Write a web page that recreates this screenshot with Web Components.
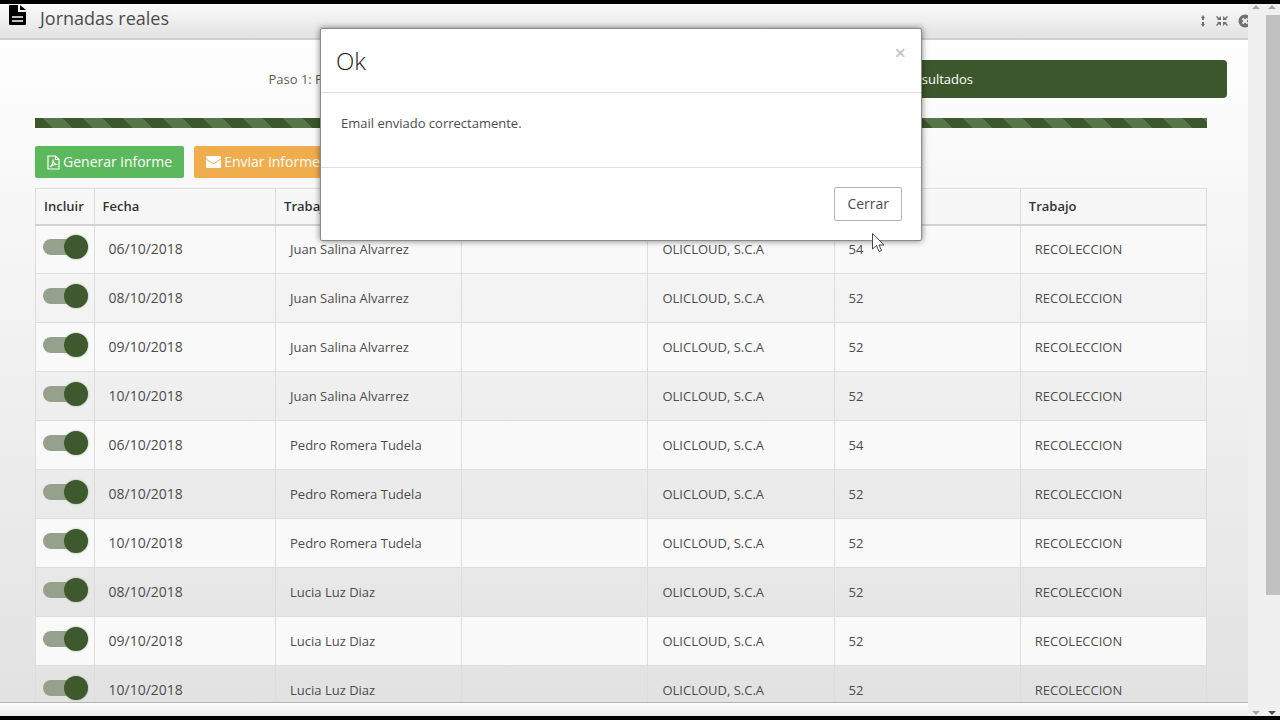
<!DOCTYPE html>
<html lang="es">
<head>
<meta charset="utf-8">
<title>Jornadas reales</title>
<style>
  html, body { height: 100%; }
  body { margin: 0; background: #000; font-family: "Open Sans", "Noto Sans", sans-serif; font-size: 13px; color: #4c4c4c; overflow: hidden; }
</style>
</head>
<body>
<app-frame>
  <title-bar>Jornadas reales</title-bar>
  <work-area>
    <wizard-steps></wizard-steps>
    <progress-strip></progress-strip>
    <report-actions></report-actions>
    <workday-table></workday-table>
  </work-area>
</app-frame>
<message-dialog heading="Ok">Email enviado correctamente.</message-dialog>
<mouse-pointer></mouse-pointer>

<script>
const define = (name, html, setup) => {
  const template = document.createElement('template');
  template.innerHTML = '<style>*{box-sizing:border-box}</style>' + html;
  customElements.define(name, class extends HTMLElement {
    constructor() {
      super();
      this.attachShadow({ mode: 'open' }).append(template.content.cloneNode(true));
    }
    connectedCallback() { if (setup) setup(this, this.shadowRoot); }
  });
};

define('scroll-rail', `
  <style>
    :host { display: flex; flex-direction: column; align-items: center; width: 16px; background: #f0f0f0; padding: 1px 0; gap: 6px; }
    svg { display: block; width: 8px; height: 4px; flex: none; fill: #a3a3a3; }
    .track { flex: 1; align-self: stretch; padding-left: 2px; }
    .thumb { display: none; height: 84%; background: #c1c1c1; }
    :host([active]) .thumb { display: block; }
    :host([active]) .down { fill: #505050; }
  </style>
  <svg viewBox="0 0 8 4"><path d="M0 4L4 0L8 4Z"/></svg>
  <div class="track"><div class="thumb"></div></div>
  <svg class="down" viewBox="0 0 8 4"><path d="M0 0L4 4L8 0Z"/></svg>`);

define('app-frame', `
  <style>
    :host { display: flex; height: 100vh; box-sizing: border-box; padding: 4px 0; background: #000; }
    main { flex: 1; min-width: 0; display: flex; flex-direction: column; overflow: hidden; }
    footer { flex: none; height: 14px; border-top: 1px solid #b4b4b4; background: linear-gradient(#fff, #ebebeb); }
  </style>
  <main><slot></slot><footer></footer></main>
  <scroll-rail></scroll-rail><scroll-rail active></scroll-rail>`);

define('title-bar', `
  <style>
    :host { flex: none; display: flex; align-items: center; box-sizing: border-box; height: 36px; padding-left: 8px; border-bottom: 2px solid #d0d0d0; background: linear-gradient(#fafafa, #e2e2e2); }
    .doc { width: 18px; height: 22px; align-self: flex-start; margin-right: 14px; }
    h1 { flex: 1; margin: 0 0 6px; font-size: 18px; line-height: 24px; font-weight: 400; color: #4c4c4c; }
    nav { display: flex; align-items: center; gap: 9px; margin-right: -4px; }
    button { display: block; border: 0; padding: 0; background: none; color: #707070; }
    button svg { display: block; height: 14px; }
  </style>
  <svg class="doc" viewBox="0 0 18 22"><path d="M2 1H10V8H18V20Q18 21 17 21H2Q1 21 1 20V2Q1 1 2 1Z"/><path d="M12 1L18 6H12Z"/><path d="M4 13H15M4 17H15" stroke="#fff" stroke-width="1.500"/></svg>
  <h1><slot></slot></h1>
  <nav>
    <button aria-label="Contraer"><svg width="6" viewBox="0 0 6 14" fill="currentColor"><path d="M3 1L5 4H4V6H2V4H1ZM3 13L1 10H2V8H4V10H5Z"/></svg></button>
    <button aria-label="Restaurar"><svg width="14" viewBox="0 0 14 14" fill="currentColor"><path d="M6 2V6H2L3 5L1 3L2 2L4 4ZM8 2V6H12L11 5L13 3L12 2L10 4ZM6 12V8H2L3 9L1 11L2 12L4 10ZM8 12V8H12L11 9L13 11L12 12L10 10Z"/></svg></button>
    <button aria-label="Cerrar ventana"><svg width="14" viewBox="0 0 14 14"><circle cx="7" cy="7" r="6.500" fill="currentColor"/><path d="M4.500 4.500L9.500 9.500M9.500 4.500L4.500 9.500" stroke="#eee" stroke-width="2"/></svg></button>
  </nav>`);

define('work-area', `
  <style>
    :host { flex: 1; min-height: 0; display: flex; flex-direction: column; box-sizing: border-box; overflow: hidden; padding: 20px 21px 0 35px; background: linear-gradient(#fefefe, #fafafa 15%, #e2e2e2); }
  </style><slot></slot>`);

define('wizard-steps', `
  <style>
    :host { flex: none; display: grid; grid-template-columns: 47fr 53fr; gap: 20px; }
    a { display: block; padding: 9px 15px; line-height: 20px; text-align: center; text-decoration: none; border-radius: 4px; color: #5a5f50; }
    a[aria-current] { background: #3d572c; color: #fff; }
  </style>
  <a href="#paso1">Paso 1: Filtros</a><a href="#paso2" aria-current="step">Paso 2: Resultados</a>`);

define('progress-strip', `
  <style>
    :host { flex: none; display: block; height: 10px; margin: 20px 20px 18px 0; background: #3d572c linear-gradient(45deg, #567648 25%, transparent 25%, transparent 50%, #567648 50%, #567648 75%, transparent 75%) 8px 0 / 40px 40px; }
  </style>`);

define('report-actions', `
  <style>
    :host { flex: none; display: flex; gap: 10px; margin-bottom: 10px; }
    button { display: flex; align-items: center; gap: 3px; height: 32px; padding: 0 12px; border: 0; border-radius: 2px; color: #fff; font: 14px/20px "Open Sans", sans-serif; }
    .ok { background: #5cb85c; } .warn { background: #f0ad4e; }
    svg { display: block; fill: none; stroke: #fff; }
  </style>
  <button class="ok"><svg width="13" height="15" viewBox="0 0 13 15" stroke-width="1.200"><path d="M1 1H8.500L12 4.500V14H1ZM8.500 1V4.500H12M3 12C5 10.500 6.500 7 6 4.500C5.500 7 8 10 10.500 9.500C8 9 5 10 3 12"/></svg>Generar informe</button>
  <button class="warn"><svg width="15" height="12" viewBox="0 0 15 12"><path d="M1 0H14Q15 0 15 1V11Q15 12 14 12H1Q0 12 0 11V1Q0 0 1 0Z" fill="#fff" stroke="none"/><path d="M0 3L6 7Q7.500 8 9 7L15 3" stroke="#f0ad4e"/></svg>Enviar informe</button>`);

define('toggle-switch', `
  <style>
    :host { display: block; }
    input { appearance: none; display: flex; align-items: center; justify-content: flex-end; width: 43px; height: 16px; margin: 0; border-radius: 8px; background: #95a18d; }
    input::before { content: ""; width: 24px; height: 24px; flex: none; margin-right: -2px; border-radius: 50%; background: #3f592e; box-shadow: 0 0 2px #8aa07c; }
  </style>
  <input type="checkbox" role="switch" checked aria-label="Incluir">`);

const workers = [
  ['06', 'Juan Salina Alvarrez', 54], ['08', 'Juan Salina Alvarrez', 52], ['09', 'Juan Salina Alvarrez', 52], ['10', 'Juan Salina Alvarrez', 52],
  ['06', 'Pedro Romera Tudela', 54], ['08', 'Pedro Romera Tudela', 52], ['10', 'Pedro Romera Tudela', 52],
  ['08', 'Lucia Luz Diaz', 52], ['09', 'Lucia Luz Diaz', 52], ['10', 'Lucia Luz Diaz', 52]
];

define('workday-table', `
  <style>
    :host { display: block; flex: none; margin-right: 20px; }
    table { width: 100%; table-layout: fixed; border-collapse: collapse; border: 1px solid #ddd; line-height: 20px; }
    th, td { border: 1px solid #ddd; text-align: left; }
    th { height: 36px; padding: 0 8px; border-bottom: 2px solid #d2d2d2; font-weight: 600; color: #333; }
    td { height: 49px; padding: 0 14px; }
    td:first-child { padding: 0 7px 4px; }
    td:nth-child(2) { font-size: 14px; }
    tbody tr:nth-child(odd) { background: #f9f9f9; }
    .pick { width: 5%; } .date { width: 15.5%; }
  </style>
  <table>
    <colgroup><col class="pick"><col class="date"><col><col><col><col><col></colgroup>
    <thead><tr><th>Incluir</th><th>Fecha</th><th>Trabajador</th><th></th><th></th><th></th><th>Trabajo</th></tr></thead>
    <tbody></tbody>
  </table>`, (host, root) => {
  root.querySelector('tbody').innerHTML = workers.map(([day, name, id]) =>
    `<tr><td><toggle-switch></toggle-switch></td><td>${day}/10/2018</td><td>${name}</td><td></td><td>OLICLOUD, S.C.A</td><td>${id}</td><td>RECOLECCION</td></tr>`).join('');
});

define('message-dialog', `
  <style>
    :host { position: absolute; top: 28px; left: 0; right: 38px; margin: 0 auto; display: block; box-sizing: border-box; width: 602px; background: #fff; border: 1px solid #8a8a8a; border-radius: 2px; box-shadow: 0 0 6px rgba(0,0,0,.5); }
    header { display: flex; justify-content: space-between; padding: 16px 15px; border-bottom: 1px solid #ddd; }
    h2 { margin: 0; font-size: 24px; line-height: 31px; font-weight: 300; color: #222; }
    header button { align-self: flex-start; border: 0; padding: 0; background: none; color: #c4c4c4; font: 600 20px/16px "Open Sans", sans-serif; }
    p { margin: 0; padding: 20px 20px 34px; line-height: 20px; }
    footer { display: flex; justify-content: flex-end; padding: 19px; border-top: 1px solid #ddd; }
    footer button { height: 34px; padding: 0 12px; border: 1px solid #b5b5b5; border-radius: 2px; background: #fff; color: #4c4c4c; font: 14px/20px "Open Sans", sans-serif; }
  </style>
  <header><h2></h2><button aria-label="Cerrar mensaje">×</button></header>
  <p><slot></slot></p>
  <footer><button>Cerrar</button></footer>`, (host, root) => {
  root.querySelector('h2').textContent = host.getAttribute('heading');
  host.setAttribute('role', 'dialog');
});

define('mouse-pointer', `
  <style>:host { position: absolute; left: 872px; top: 233px; display: block; pointer-events: none; } svg { display: block; }</style>
  <svg width="13" height="20" viewBox="0 0 13 20"><path d="M.5 .5V16L4.500 12.500L7 18.500L9.500 17.500L7 12H12Z" fill="#fff" stroke="#444"/></svg>`);
</script>
</body>
</html>
